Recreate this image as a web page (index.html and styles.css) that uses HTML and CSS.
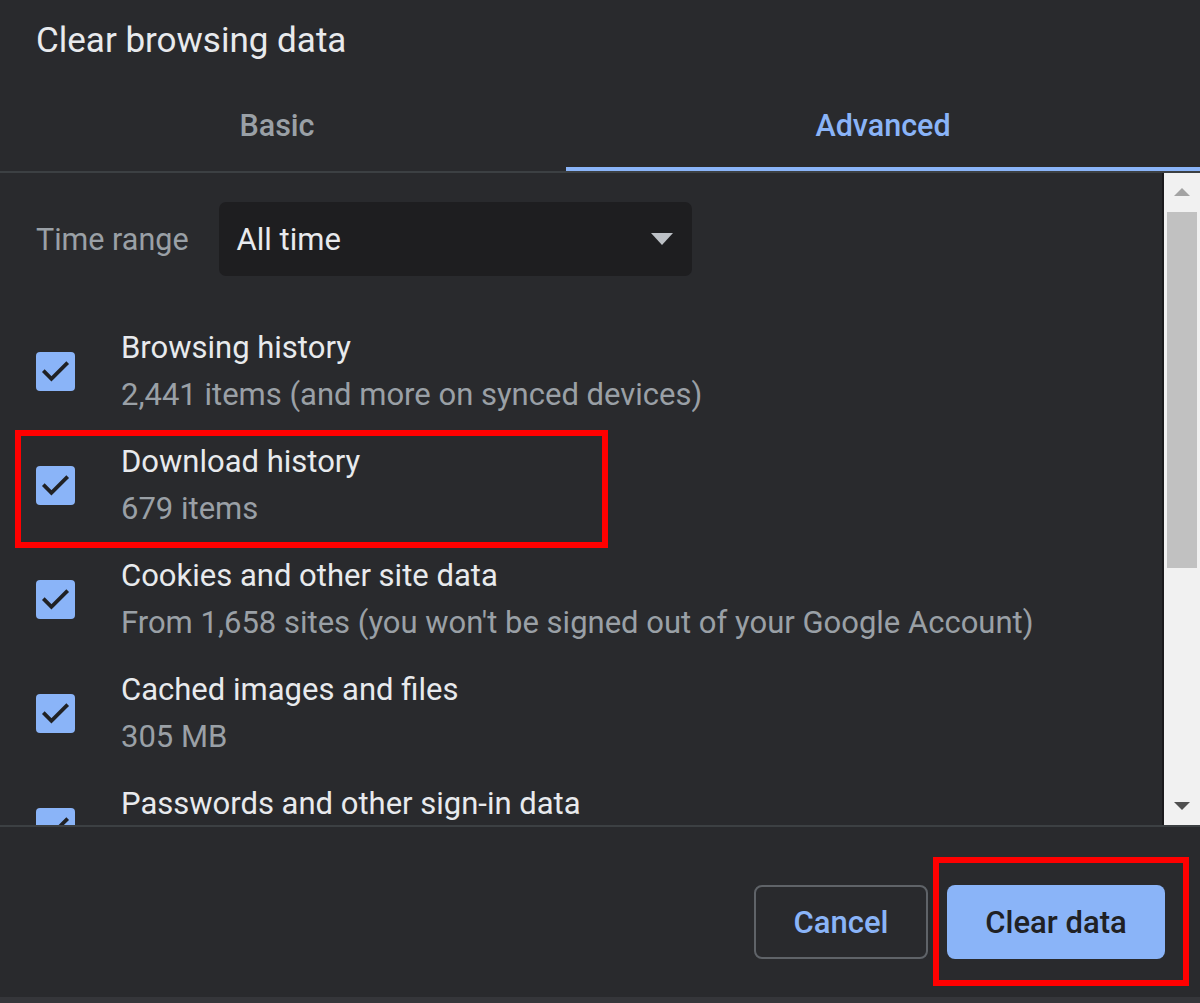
FILE: index.html
```html
<!DOCTYPE html>
<html lang="en">
<head>
    <meta charset="UTF-8">
    <title>Clear browsing data</title>
    <link rel="stylesheet" href="styles.css">
</head>
<body>

<div class="dialog">
    <h1 class="title">Clear browsing data</h1>

    <!-- Tabs -->
    <div class="tabs">
        <div class="tab tab-basic">Basic</div>
        <div class="tab active">Advanced</div>
    </div>

    <!-- Scrolling body -->
    <div class="body">
        <div class="content">
            <div class="range-row">
                <span class="range-label">Time range</span>
                <div class="select">
                    <span>All time</span>
                    <span class="caret"></span>
                </div>
            </div>

            <div class="option">
                <span class="checkbox"><svg viewBox="0 0 24 24"><path d="M4.5 11.5l5 5L19.5 6.5"/></svg></span>
                <div class="option-text">
                    <div class="option-title">Browsing history</div>
                    <div class="option-sub">2,441 items (and more on synced devices)</div>
                </div>
            </div>
            <div class="option">
                <span class="checkbox"><svg viewBox="0 0 24 24"><path d="M4.5 11.5l5 5L19.5 6.5"/></svg></span>
                <div class="option-text">
                    <div class="option-title">Download history</div>
                    <div class="option-sub">679 items</div>
                </div>
            </div>
            <div class="option">
                <span class="checkbox"><svg viewBox="0 0 24 24"><path d="M4.5 11.5l5 5L19.5 6.5"/></svg></span>
                <div class="option-text">
                    <div class="option-title">Cookies and other site data</div>
                    <div class="option-sub">From 1,658 sites (you won't be signed out of your Google Account)</div>
                </div>
            </div>
            <div class="option">
                <span class="checkbox"><svg viewBox="0 0 24 24"><path d="M4.5 11.5l5 5L19.5 6.5"/></svg></span>
                <div class="option-text">
                    <div class="option-title">Cached images and files</div>
                    <div class="option-sub">305 MB</div>
                </div>
            </div>
            <div class="option">
                <span class="checkbox"><svg viewBox="0 0 24 24"><path d="M4.5 11.5l5 5L19.5 6.5"/></svg></span>
                <div class="option-text">
                    <div class="option-title">Passwords and other sign-in data</div>
                </div>
            </div>
        </div>

        <div class="scrollbar">
            <div class="sb-btn"><span class="sb-up"></span></div>
            <div class="sb-track">
                <div class="sb-thumb"></div>
            </div>
            <div class="sb-btn"><span class="sb-down"></span></div>
        </div>
    </div>

    <!-- Footer -->
    <div class="footer">
        <button class="btn btn-cancel">Cancel</button>
        <button class="btn btn-primary">Clear data</button>
    </div>
    <div class="bottom-strip"></div>

    <!-- annotation boxes -->
    <div class="mark mark-download"></div>
    <div class="mark mark-clear"></div>
</div>

</body>
</html>
```

FILE: styles.css
```css
* {
    margin: 0;
    padding: 0;
    box-sizing: border-box;
}

body {
    font-family: Roboto, "Liberation Sans", sans-serif;
    background-color: #292a2d;
    color: #e8eaed;
    overflow: hidden;
}

.dialog {
    position: relative;
    width: 1200px;
    height: 1003px;
    display: flex;
    flex-direction: column;
    background: #292a2d;
}

.title {
    height: 85px;
    padding: 19px 0 0 36px;
    font-size: 35px;
    font-weight: 400;
    line-height: 44px;
    color: #e8eaed;
}

.tabs {
    display: flex;
    height: 88px;
    border-bottom: 2px solid #3c4043;
}

.tab {
    display: flex;
    align-items: center;
    justify-content: center;
    font-size: 30.5px;
    font-weight: 500;
    color: #9aa0a6;
    padding-bottom: 6px;
}

.tab-basic {
    width: 566px;
    padding-right: 12px;
}

.tab.active {
    flex: 1;
    color: #8ab4f8;
    border-bottom: 4px solid #8ab4f8;
    padding-bottom: 2px;
}

.body {
    display: flex;
    height: 654px;
    border-bottom: 2px solid #3c4043;
}

.content {
    flex: 1;
    overflow: hidden;
    padding: 29px 0 0 36px;
}

.range-row {
    display: flex;
    align-items: center;
    gap: 30px;
    margin-bottom: 48px;
}

.range-label {
    font-size: 30.5px;
    color: #9aa0a6;
}

.select {
    width: 473px;
    height: 74px;
    background: #1e1e20;
    border-radius: 7px;
    display: flex;
    align-items: center;
    justify-content: space-between;
    padding: 0 19px 0 18px;
    font-size: 31px;
    color: #e8eaed;
}

.caret {
    width: 0;
    height: 0;
    border-left: 11.5px solid transparent;
    border-right: 11.5px solid transparent;
    border-top: 12px solid #bdc1c6;
}

.option {
    display: flex;
    align-items: flex-start;
    margin-bottom: 20px;
}

.checkbox {
    width: 39px;
    height: 39px;
    flex-shrink: 0;
    margin-top: 28px;
    background: #8ab4f8;
    border-radius: 4px;
    margin-right: 46px;
    display: flex;
}

.checkbox svg {
    width: 39px;
    height: 39px;
    fill: none;
    stroke: #202124;
    stroke-width: 2.3;
}

.option-title {
    font-size: 31px;
    line-height: 47px;
    color: #e8eaed;
}

.option-sub {
    font-size: 31px;
    line-height: 47px;
    color: #9aa0a6;
}

.scrollbar {
    width: 38px;
    background: #f1f1f1;
    border-left: 2px solid #1a1a1c;
    display: flex;
    flex-direction: column;
}

.sb-btn {
    height: 38px;
    display: flex;
    align-items: center;
    justify-content: center;
}

.sb-up {
    width: 0;
    height: 0;
    border-left: 8px solid transparent;
    border-right: 8px solid transparent;
    border-bottom: 8px solid #a3a3a3;
}

.sb-down {
    width: 0;
    height: 0;
    border-left: 8px solid transparent;
    border-right: 8px solid transparent;
    border-top: 8px solid #505050;
}

.sb-track {
    flex: 1;
    padding: 1px 3px 0 3px;
}

.sb-thumb {
    height: 356px;
    background: #c1c1c1;
}

.footer {
    flex: 1;
    display: flex;
    justify-content: flex-end;
    align-items: flex-start;
    gap: 19px;
    padding: 58px 35px 0 0;
}

.btn {
    height: 74px;
    border-radius: 8px;
    font-family: Roboto, "Liberation Sans", sans-serif;
    font-size: 31px;
    font-weight: 500;
}

.btn-cancel {
    width: 174px;
    background: transparent;
    border: 2px solid #5f6368;
    color: #8ab4f8;
}

.btn-primary {
    width: 218px;
    background: #8ab4f8;
    border: none;
    color: #202124;
}

.bottom-strip {
    height: 6px;
    background: #35363a;
}

.mark {
    position: absolute;
    border: 6px solid #ff0000;
}

.mark-download {
    left: 15px;
    top: 430px;
    width: 593px;
    height: 118px;
}

.mark-clear {
    left: 933px;
    top: 857px;
    width: 256px;
    height: 129px;
}
```
